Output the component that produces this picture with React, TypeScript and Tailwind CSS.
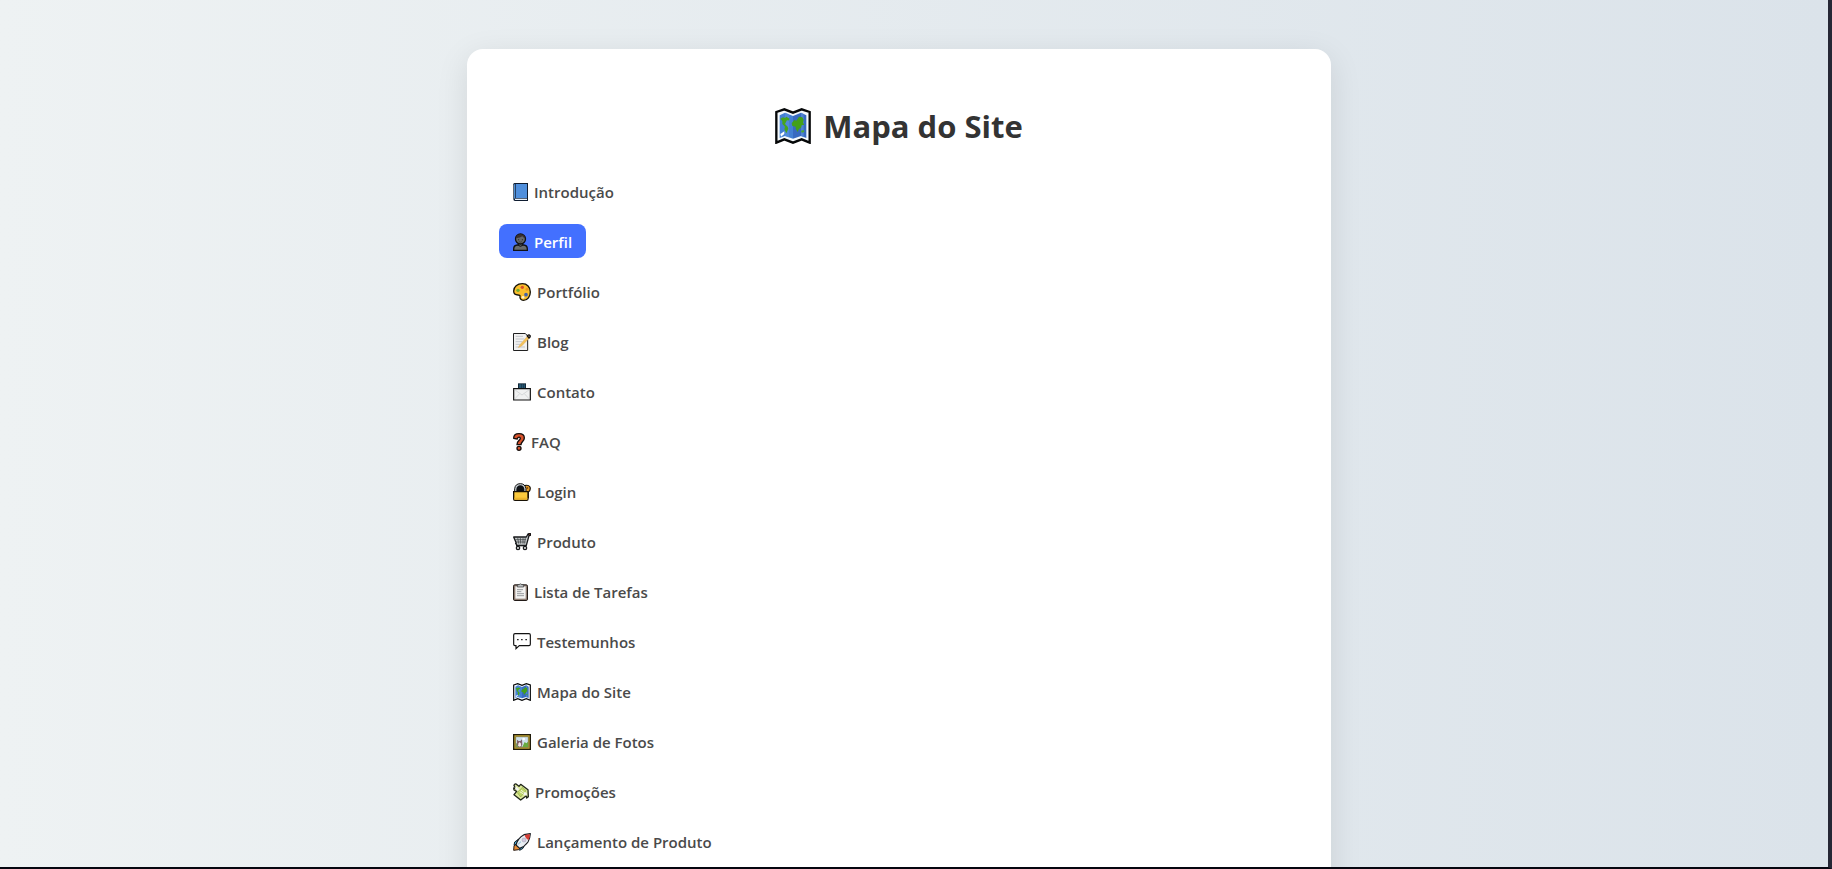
import type { ReactNode } from "react";

type IconProps = { w: number; className?: string; children: ReactNode };

function Icon({ w, className = "h-[18px]", children }: IconProps) {
  return (
    <svg viewBox={`0 0 ${w} 54`} className={`${className} w-auto shrink-0`} aria-hidden="true">
      {children}
    </svg>
  );
}

function BookIcon() {
  return (
    <Icon w={45}>
      <path d="M1 4 Q1 0 5 0H45V54H6Q1 54 1 48Z" fill="#0e1c30" />
      <path d="M3 5Q3 3 6 3V46Q3 47 3 49Z" fill="#4f8fd0" />
      <path d="M8 3H42V45H8Z" fill="#4f8fdc" />
      <path d="M6 47H42V51H6Z" fill="#e9f2fb" />
    </Icon>
  );
}

function PersonIcon() {
  return (
    <Icon w={45}>
      <path d="M2 52V48Q2 37 13 36H32Q43 37 43 48V52Z" fill="#686b6e" stroke="#101114" strokeWidth="4" />
      <path d="M16 29H29V37Q22 43 16 37Z" fill="#5a5c60" stroke="#101114" strokeWidth="3" />
      <circle cx="22.5" cy="18" r="15" fill="#66686c" stroke="#101114" strokeWidth="4" />
      <path d="M9 15Q10 4 22 4Q35 4 36 15Q31 15 28 10Q20 16 9 15Z" fill="#3a302f" />
      <circle cx="17" cy="20" r="1.6" fill="#111" />
      <circle cx="28" cy="20" r="1.6" fill="#111" />
      <path d="M18 26Q22.5 29 27 26" fill="none" stroke="#222" strokeWidth="1.5" />
    </Icon>
  );
}

function PaletteIcon() {
  return (
    <Icon w={54}>
      <path
        d="M28 2C13 2 2 11 2 24C2 32 8 36 15 36C19 36 22 37 21 41C20 46 24 52 31 52C44 52 52 40 52 27C52 12 42 2 28 2Z"
        fill="#fbbf2d"
        stroke="#151208"
        strokeWidth="4"
      />
      <circle cx="15" cy="22" r="5" fill="#6fae35" />
      <circle cx="28" cy="13" r="5" fill="#d9502c" />
      <circle cx="42" cy="19" r="4.5" fill="#e99a22" />
      <circle cx="39" cy="35" r="5.5" fill="#4663a8" />
      <circle cx="30" cy="43" r="4" fill="#fff4d2" />
    </Icon>
  );
}

function MemoIcon() {
  return (
    <Icon w={54}>
      <path d="M1.500 1.500H37L44 9V52.500H1.500Z" fill="#f1f1f1" stroke="#202020" strokeWidth="3" />
      <path d="M8 10H30M8 18H34M8 26H28M8 34H22M8 42H36" stroke="#b9bdc1" strokeWidth="2.5" />
      <path d="M16 44L20 36L44 9L50 14L26 39Z" fill="#f5c35c" stroke="#d09a48" strokeWidth="1" />
      <path d="M43 9Q46 5 49 6Q53 8 51 12L48 15Z" fill="#cfa68b" stroke="#111" strokeWidth="4" />
    </Icon>
  );
}

function EnvelopeIcon() {
  return (
    <Icon w={54}>
      <path d="M15 1H39V20H15Z" fill="#112738" />
      <path d="M19 4H23V16H19ZM26 4H29V16H26ZM32 4H35V16H32Z" fill="#326e8e" />
      <path d="M2 17H52V51H2Z" fill="#f0f1f1" stroke="#101010" strokeWidth="3.5" />
      <path d="M5 20L27 36L49 20M5 48L20 32M49 48L34 32" fill="none" stroke="#c8cccd" strokeWidth="2" />
    </Icon>
  );
}

function QuestionIcon() {
  return (
    <Icon w={36}>
      <path
        d="M2 16C2 7 9 2 18 2C27 2 34 7 34 15C34 25 24 26 24 35H12C12 23 22 22 22 16C22 11 14 11 13 18Z"
        fill="#d9532c"
        stroke="#160d0a"
        strokeWidth="4"
        strokeLinejoin="round"
      />
      <circle cx="18" cy="46" r="6" fill="#d9532c" stroke="#160d0a" strokeWidth="4" />
    </Icon>
  );
}

function LockIcon() {
  return (
    <Icon w={54}>
      <path d="M34 8Q46 4 51 12Q54 22 46 27V44L39 48L35 44Z" fill="#e59a26" stroke="#171006" strokeWidth="3.5" />
      <path d="M5 28V17Q7 2 22 2Q36 2 39 17V28Z" fill="#c7ced3" stroke="#111" strokeWidth="3" />
      <path d="M10 28V18Q12 7 22 7Q32 7 34 18V28Z" fill="#0c0f13" />
      <path d="M2 26H45V48Q45 52 41 52H6Q2 52 2 48Z" fill="#fcca3d" stroke="#181105" strokeWidth="4" />
      <path d="M4 44H43V50H4Z" fill="#eeb52d" />
      <circle cx="43" cy="15" r="2.5" fill="#4d2b09" />
    </Icon>
  );
}

function CartIcon() {
  return (
    <Icon w={54}>
      <path d="M2 12H40L45 3L52 2V7L48 8L40 37H12L8 31H10Z" fill="#c4c8ca" stroke="#17191b" strokeWidth="4" strokeLinejoin="round" />
      <path d="M7 20H39M9 27H37M14 14L17 32M22 14L23 32M30 14V32M37 14L35 32" stroke="#34383a" strokeWidth="2" />
      <path d="M9 38H41" stroke="#17191b" strokeWidth="4" />
      <path d="M46 3L52 2V7L48 8Z" fill="#a34b35" stroke="#111" strokeWidth="3" />
      <circle cx="15" cy="45" r="5" fill="#eee" stroke="#17191b" strokeWidth="4" />
      <circle cx="36" cy="45" r="5" fill="#eee" stroke="#17191b" strokeWidth="4" />
    </Icon>
  );
}

function ClipboardIcon() {
  return (
    <Icon w={45}>
      <rect x="1.500" y="5.500" width="42" height="47" rx="4" fill="#8e7d72" stroke="#211a17" strokeWidth="3" />
      <path d="M7 10H38V47H7Z" fill="#f3f2f1" />
      <path d="M13 9V5H18Q22 0 27 5H32V12H13Z" fill="#bdc1c3" stroke="#333" strokeWidth="2" />
      <path d="M12 20H30M12 26H25M12 32H33M12 38H33" stroke="#85898d" strokeWidth="2.5" />
    </Icon>
  );
}

function ChatIcon() {
  return (
    <Icon w={54}>
      <path d="M6 2H48Q52 2 52 6V34Q52 38 48 38H19L9 47V38H6Q2 38 2 34V6Q2 2 6 2Z" fill="#fff" stroke="#121212" strokeWidth="3.5" />
      <path d="M12 20H17M24 20H29M37 20H42" stroke="#2b2b2b" strokeWidth="4" />
    </Icon>
  );
}

function MapIcon({ className }: { className?: string }) {
  return (
    <Icon w={54} className={className}>
      <path d="M2 6L14 2L27 7L40 2L52 6V52L40 47L27 52L14 47L2 52Z" fill="#f5fafd" stroke="#050708" strokeWidth="3.5" />
      <path d="M7 11L15 7L27 12V46L15 42L7 45Z" fill="#4380d3" />
      <path d="M27 12L39 7L47 11V45L39 42L27 46Z" fill="#386ac0" />
      <path d="M15 7L21 9.500V44L15 42ZM39 7L43 9V44L39 42Z" fill="#5b91dc" opacity=".65" />
      <path d="M8 16L12 14L15 15L17 13L22 16L20 19L18 18L15 24L19 28L20 31L17 38L14 32L15 28L11 24L11 20Z" fill="#46a51e" />
      <path d="M25 23L29 18L32 19L36 13L41 14L43 18L42 22L44 25L40 26L39 30L36 31L34 36L31 31L31 28L26 27Z" fill="#43a019" />
      <path d="M39 34L43 33L44 36L40 37Z" fill="#4ba82a" />
      <path d="M8 39L14 35V39L9 43Z" fill="#fff" />
    </Icon>
  );
}

function PictureIcon() {
  return (
    <Icon w={54}>
      <path d="M2 5H52V49H2Z" fill="#c0a532" stroke="#201b0a" strokeWidth="4" />
      <path d="M8 11H46V43H8Z" fill="#cfe2ed" stroke="#71601f" strokeWidth="2" />
      <path d="M28 42L35 27L40 31L45 26V42Z" fill="#68ab40" />
      <path d="M9 42V30L15 34L25 31V42Z" fill="#779b59" />
      <path d="M12 20L17 24H22L27 19L28 35L25 42H17L12 35Z" fill="#80606a" />
      <path d="M17 31L20 27L23 31L25 38L20 41L15 38Z" fill="#f5ebe6" />
      <circle cx="32" cy="18" r="4" fill="#fff" />
    </Icon>
  );
}

function MoneyIcon() {
  return (
    <Icon w={48}>
      <path
        d="M3 8Q4 2 9 3L18 10L23 4L45 20L46 41L41 45L40 38L23 51L3 35L11 25L3 21L2 15L10 18Z"
        fill="#dce99a"
        stroke="#20251a"
        strokeWidth="4"
        strokeLinejoin="round"
      />
      <path d="M13 29L28 13L39 23L23 42Z" fill="#bdd667" stroke="#82963e" strokeWidth="1.5" />
      <path d="M8 9L19 19L13 23L6 17ZM33 27L41 30L42 38L31 35Z" fill="#f3f5ed" />
      <path d="M20 26L30 32M24 22L32 27" stroke="#f4f6df" strokeWidth="3" />
    </Icon>
  );
}

function RocketIcon() {
  return (
    <Icon w={54}>
      <path d="M3 39L8 33L22 44L17 50L2 52Z" fill="#e78b34" stroke="#27180f" strokeWidth="3" />
      <path d="M15 20L5 27L3 37L15 31ZM35 35L30 46L20 52L21 41Z" fill="#4bb0df" stroke="#101d26" strokeWidth="3" />
      <path d="M9 36Q14 15 33 5L52 2Q51 17 45 27Q35 41 20 46Z" fill="#e9eef3" stroke="#181b20" strokeWidth="3.5" strokeLinejoin="round" />
      <path d="M35 6L51 3Q51 12 47 21Q37 17 35 6Z" fill="#d53d35" />
      <circle cx="33" cy="21" r="6" fill="#d5c7dd" stroke="#a6a9bd" strokeWidth="2" />
      <path d="M14 35L24 26" stroke="#87bbd4" strokeWidth="3" />
    </Icon>
  );
}

const links: { label: string; href: string; icon: ReactNode; active?: boolean }[] = [
  { label: "Introdução", href: "#introducao", icon: <BookIcon /> },
  { label: "Perfil", href: "#perfil", icon: <PersonIcon />, active: true },
  { label: "Portfólio", href: "#portfolio", icon: <PaletteIcon /> },
  { label: "Blog", href: "#blog", icon: <MemoIcon /> },
  { label: "Contato", href: "#contato", icon: <EnvelopeIcon /> },
  { label: "FAQ", href: "#faq", icon: <QuestionIcon /> },
  { label: "Login", href: "#login", icon: <LockIcon /> },
  { label: "Produto", href: "#produto", icon: <CartIcon /> },
  { label: "Lista de Tarefas", href: "#tarefas", icon: <ClipboardIcon /> },
  { label: "Testemunhos", href: "#testemunhos", icon: <ChatIcon /> },
  { label: "Mapa do Site", href: "#mapa", icon: <MapIcon /> },
  { label: "Galeria de Fotos", href: "#galeria", icon: <PictureIcon /> },
  { label: "Promoções", href: "#promocoes", icon: <MoneyIcon /> },
  { label: "Lançamento de Produto", href: "#lancamento", icon: <RocketIcon /> },
];

export default function App() {
  return (
    <div className="flex h-screen flex-col overflow-hidden border-r-4 border-b-2 border-r-[#252735] border-b-[#05060f] bg-linear-to-r from-[#eef2f3] to-[#dbe3ea] pt-[49px] pr-[30px] font-['Open_Sans','Noto_Sans',sans-serif]">
      <main className="mx-auto w-full max-w-[864px] shrink-0 rounded-2xl bg-white px-8 pt-[53px] pb-12 shadow-[0_8px_32px_rgba(0,0,0,0.1)]">
        <h1 className="flex items-center justify-center gap-3 text-[31px] leading-12 font-bold text-[#333]">
          <MapIcon className="h-9" />
          Mapa do Site
        </h1>
        <nav aria-label="Mapa do Site" className="pt-6">
          <ul className="flex flex-col gap-4">
            {links.map(({ label, href, icon, active }) => (
              <li key={href} className="flex">
                <a
                  href={href}
                  aria-current={active ? "page" : undefined}
                  className={
                    active
                      ? "flex h-[34px] items-center gap-1.5 rounded-lg bg-[#4370ff] px-[14px] pt-0.5 text-[15px] font-semibold text-white"
                      : "flex h-[34px] items-center gap-1.5 rounded-lg px-[14px] pt-0.5 text-[15px] font-semibold text-[#4a4a4a]"
                  }
                >
                  {icon}
                  {label}
                </a>
              </li>
            ))}
          </ul>
        </nav>
      </main>
    </div>
  );
}
